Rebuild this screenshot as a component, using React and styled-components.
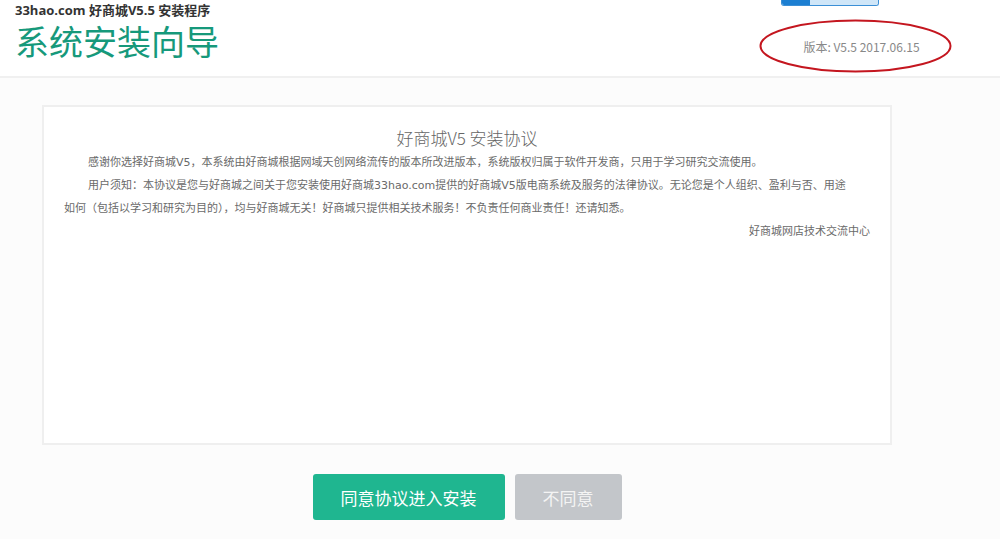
import React from "react";
import styled, { createGlobalStyle } from "styled-components";

const Global = createGlobalStyle`
  html, body { margin: 0; padding: 0; }
  body {
    background: #fcfcfc;
    font-family: "Noto Sans CJK SC", "Noto Sans", sans-serif;
    color: #666;
  }
`;

const Header = styled.header`
  height: 76px;
  background: #fff;
  border-bottom: 2px solid #f0f0f0;
  display: flex;
  justify-content: space-between;
  align-items: flex-start;
  padding: 0 48px 0 15px;
`;

const Brand = styled.div`
  display: flex;
  flex-direction: column;
`;

const SubTitle = styled.div`
  font-family: "Open Sans", "Noto Sans CJK SC", sans-serif;
  font-size: 13px;
  font-weight: bold;
  line-height: 21px;
  color: #333;
`;

const BigTitle = styled.h1`
  margin: 0;
  font-size: 34px;
  font-weight: normal;
  line-height: 40px;
  color: #16997b;
`;

const Side = styled.div`
  display: flex;
  flex-direction: column;
  align-items: flex-start;
`;

const Widget = styled.div`
  margin-left: 22px;
  width: 98px;
  height: 6px;
  display: flex;
  border: 1px solid #3b8fd6;
  border-top: none;
  border-radius: 0 0 3px 3px;
  overflow: hidden;
  box-sizing: border-box;
`;

const WidgetDark = styled.div`
  width: 28px;
  background: #1c7fd2;
`;

const WidgetLight = styled.div`
  flex: 1;
  background: #cfe6f8;
`;

const VersionBox = styled.div`
  position: relative;
  margin-top: 13px;
  width: 193px;
  height: 54px;
  display: flex;
  align-items: center;
  justify-content: center;
`;

const Ring = styled.svg`
  position: absolute;
  inset: 0;
`;

const Version = styled.span`
  position: relative;
  font-size: 12px;
  color: #888;
  padding-left: 12px;
`;

const Main = styled.main`
  width: 850px;
  margin: 27px 0 0 42px;
  display: flex;
  flex-direction: column;
  gap: 29px;
`;

const Card = styled.section`
  height: 340px;
  box-sizing: border-box;
  background: #fff;
  border: 2px solid #efefef;
  padding: 18px 20px;
`;

const CardTitle = styled.h2`
  margin: 0;
  text-align: center;
  font-size: 17px;
  font-weight: 300;
  line-height: 26px;
  color: #666;
`;

const Para = styled.p`
  margin: 0;
  max-width: ${(p) => p.$max || "none"};
  font-family: "DejaVu Sans", "Noto Sans CJK SC", sans-serif;
  font-size: 11px;
  line-height: 23px;
  color: #6a6a6a;
  text-indent: ${(p) => (p.$indent ? "24px" : "0")};
  text-align: ${(p) => (p.$right ? "right" : "left")};
`;

const Actions = styled.div`
  display: flex;
  justify-content: center;
  gap: 10px;
`;

const Button = styled.button`
  height: 46px;
  width: ${(p) => p.$w}px;
  border: none;
  border-radius: 3px;
  background: ${(p) => (p.$primary ? "#1fb690" : "#c3c6ca")};
  color: ${(p) => (p.$primary ? "#fff" : "#f4f4f4")};
  font-family: "Noto Sans CJK SC", sans-serif;
  font-size: 17px;
  cursor: pointer;
`;

export default function App() {
  return (
    <>
      <Global />
      <Header>
        <Brand>
          <SubTitle>33hao.com 好商城V5.5 安装程序</SubTitle>
          <BigTitle>系统安装向导</BigTitle>
        </Brand>
        <Side>
          <Widget>
            <WidgetDark />
            <WidgetLight />
          </Widget>
          <VersionBox>
            <Ring width="193" height="54" viewBox="0 0 193 54">
              <ellipse cx="96.5" cy="27" rx="95" ry="25.5" fill="none" stroke="#c4161f" strokeWidth="2" />
            </Ring>
            <Version>版本: V5.5 2017.06.15</Version>
          </VersionBox>
        </Side>
      </Header>
      <Main>
        <Card>
          <CardTitle>好商城V5 安装协议</CardTitle>
          <Para $indent>
            感谢你选择好商城V5，本系统由好商城根据网域天创网络流传的版本所改进版本，系统版权归属于软件开发商，只用于学习研究交流使用。
          </Para>
          <Para $indent $max="788px">
            用户须知：本协议是您与好商城之间关于您安装使用好商城33hao.com提供的好商城V5版电商系统及服务的法律协议。无论您是个人组织、盈利与否、用途如何（包括以学习和研究为目的），均与好商城无关！好商城只提供相关技术服务！不负责任何商业责任！还请知悉。
          </Para>
          <Para $right>好商城网店技术交流中心</Para>
        </Card>
        <Actions>
          <Button $primary $w={192}>同意协议进入安装</Button>
          <Button $w={107}>不同意</Button>
        </Actions>
      </Main>
    </>
  );
}
